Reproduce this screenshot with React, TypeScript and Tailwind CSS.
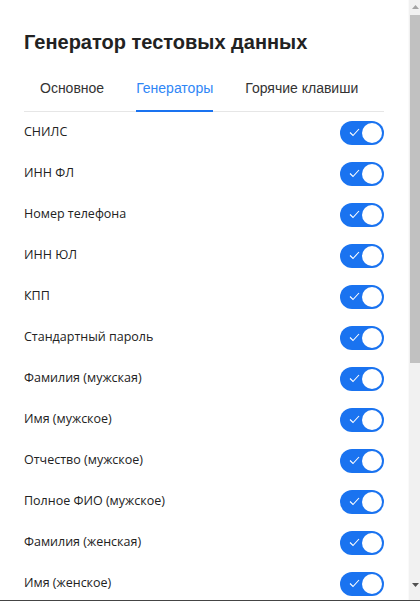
import { useState } from "react"

const generators = [
  "СНИЛС",
  "ИНН ФЛ",
  "Номер телефона",
  "ИНН ЮЛ",
  "КПП",
  "Стандартный пароль",
  "Фамилия (мужская)",
  "Имя (мужское)",
  "Отчество (мужское)",
  "Полное ФИО (мужское)",
  "Фамилия (женская)",
  "Имя (женское)",
  "Отчество (женское)",
  "Полное ФИО (женское)",
  "Email",
  "Дата рождения",
  "ОГРН",
  "ОГРНИП",
  "Номер паспорта",
  "Адрес",
]

const Toggle = ({ on, onClick }: { on: boolean; onClick: () => void }) => (
  <button
    onClick={onClick}
    className={`relative flex h-6 w-11 items-center rounded-full ${on ? "bg-[#1a73f0]" : "bg-gray-300"}`}
  >
    {on && (
      <svg className="absolute left-[9px] top-[7px]" width="11" height="9" viewBox="0 0 11 9" fill="none">
        <path d="M1 4.5 L4 7.5 L10 1" stroke="white" strokeWidth="1.1" />
      </svg>
    )}
    <span
      className={`absolute top-[2px] h-5 w-5 rounded-full bg-white ${on ? "left-[22px]" : "left-[2px]"}`}
    />
  </button>
)

// fake scrollbar, headless chrome doesn't paint one
const Scrollbar = () => (
  <div className="fixed right-0 top-0 h-full w-[12px] border-l border-[#fafafa] bg-[#f1f1f1]">
    <svg className="absolute left-[3px] top-[5px]" width="7" height="4" viewBox="0 0 7 4">
      <path d="M0 4 L3.5 0 L7 4 Z" fill="#a3a3a3" />
    </svg>
    <div className="absolute left-[1px] top-[15px] h-[348px] w-[10px] bg-[#c1c1c1]" />
    <svg className="absolute bottom-[14px] left-[3px]" width="7" height="4" viewBox="0 0 7 4">
      <path d="M0 0 L3.5 4 L7 0 Z" fill="#505050" />
    </svg>
  </div>
)

export default function App() {
  const [state, setState] = useState(generators.map(() => true))
  const tabs = ["Основное", "Генераторы", "Горячие клавиши"]

  return (
    <div className="w-[408px] bg-white pb-4 font-['Liberation_Sans',Arial,sans-serif]">
      <div className="ml-6 w-[360px]">
        <h1 className="pt-7 text-[20px] font-bold leading-7 text-[#222]">Генератор тестовых данных</h1>
        <div className="mt-[11px] flex gap-8 border-b border-[#e6e6e6] pl-4">
          {tabs.map((t, i) => (
            <div
              key={t}
              className={`-mb-px flex h-[45px] items-center border-b-2 text-[14px] ${
                i == 1 ? "border-[#1a73f0] text-[#2f86f6]" : "border-transparent text-[#333]"
              }`}
            >
              {t}
            </div>
          ))}
        </div>
        <div>
          {generators.map((g, i) => (
            <div key={g} className="flex h-[41px] items-center justify-between">
              <span className="font-['Open_Sans',sans-serif] text-[12.5px] text-[#222]">{g}</span>
              <Toggle
                on={state[i]}
                onClick={() => setState(state.map((v, j) => (j == i ? !v : v)))}
              />
            </div>
          ))}
        </div>
      </div>
      <Scrollbar />
      <div className="fixed bottom-0 left-0 h-px w-full bg-[#444]" />
    </div>
  )
}
